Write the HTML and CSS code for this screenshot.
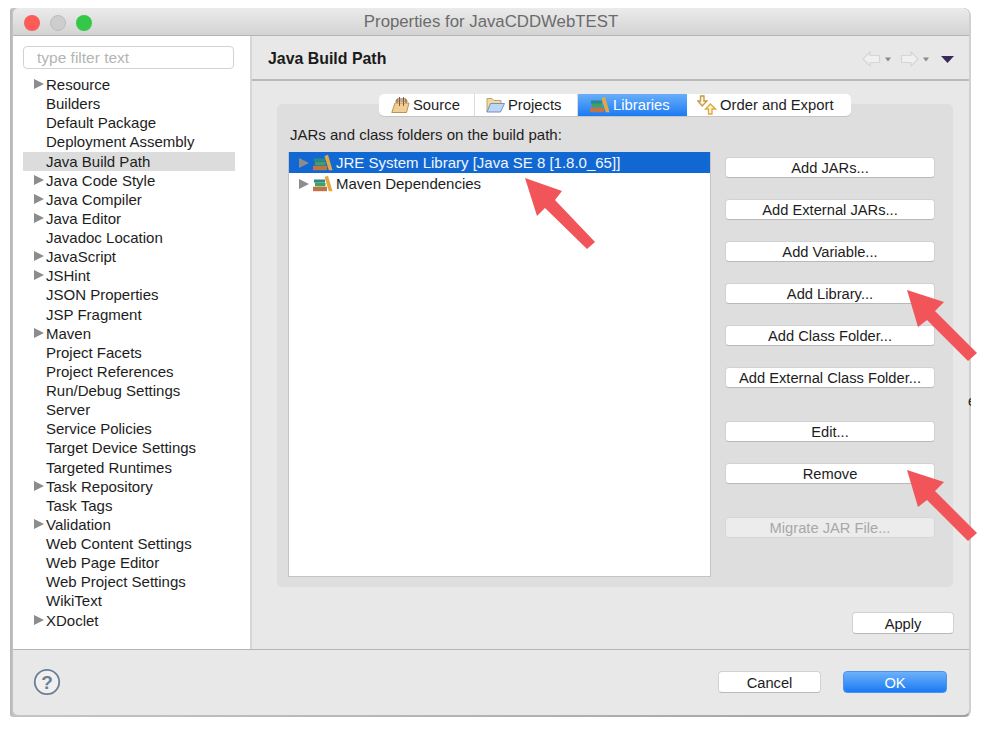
FILE: index.html
```html
<!DOCTYPE html>
<html lang="en">
<head>
    <meta charset="UTF-8">
    <title>Properties for JavaCDDWebTEST</title>
    <link rel="stylesheet" href="styles.css">
</head>
<body>
    <svg width="0" height="0" class="defs">
        <defs>
            <g id="books">
                <rect x="1" y="4.5" width="11" height="3.2" fill="#2c8a80"/>
                <rect x="2" y="8" width="10.5" height="3.4" fill="#46a05c"/>
                <rect x="0" y="11.8" width="14" height="4.4" fill="#bd7548"/>
                <path d="M11.5 2 L15 0.8 L19.5 16.2 L15.8 16.2 Z" fill="#e3a83f"/>
            </g>
        </defs>
    </svg>

    <div class="backdrop">
        <div class="window">
            <div class="titlebar">
                <div class="lights">
                    <span class="light red"></span>
                    <span class="light grey"></span>
                    <span class="light green"></span>
                </div>
                <div class="title">Properties for JavaCDDWebTEST</div>
            </div>

            <div class="main">
                <div class="sidebar">
                    <div class="filter">type filter text</div>
                    <ul class="nav">
                        <li class="has-kids">Resource</li>
                        <li>Builders</li>
                        <li>Default Package</li>
                        <li>Deployment Assembly</li>
                        <li class="active">Java Build Path</li>
                        <li class="has-kids">Java Code Style</li>
                        <li class="has-kids">Java Compiler</li>
                        <li class="has-kids">Java Editor</li>
                        <li>Javadoc Location</li>
                        <li class="has-kids">JavaScript</li>
                        <li class="has-kids">JSHint</li>
                        <li>JSON Properties</li>
                        <li>JSP Fragment</li>
                        <li class="has-kids">Maven</li>
                        <li>Project Facets</li>
                        <li>Project References</li>
                        <li>Run/Debug Settings</li>
                        <li>Server</li>
                        <li>Service Policies</li>
                        <li>Target Device Settings</li>
                        <li>Targeted Runtimes</li>
                        <li class="has-kids">Task Repository</li>
                        <li>Task Tags</li>
                        <li class="has-kids">Validation</li>
                        <li>Web Content Settings</li>
                        <li>Web Page Editor</li>
                        <li>Web Project Settings</li>
                        <li>WikiText</li>
                        <li class="has-kids">XDoclet</li>
                    </ul>
                </div>

                <div class="content">
                    <div class="header">
                        <h2>Java Build Path</h2>
                        <div class="history">
                            <svg width="30" height="16" viewBox="0 0 30 16">
                                <path d="M1 8 L8 1 V4.5 H17.5 V11.5 H8 V15 Z" fill="#f0f0f0" stroke="#d6d6d6" stroke-width="1.2"/>
                                <path d="M23 6.5 H29 L26 10.5 Z" fill="#8a8a8a"/>
                            </svg>
                            <svg width="30" height="16" viewBox="0 0 30 16">
                                <path d="M18 8 L11 1 V4.5 H1.5 V11.5 H11 V15 Z" fill="#f0f0f0" stroke="#d6d6d6" stroke-width="1.2"/>
                                <path d="M23 6.5 H29 L26 10.5 Z" fill="#8a8a8a"/>
                            </svg>
                            <svg class="menu-arrow" width="13" height="7" viewBox="0 0 13 7">
                                <path d="M0 0 H13 L6.5 7 Z" fill="#3a2a5c"/>
                            </svg>
                        </div>
                    </div>

                    <div class="body">
                        <div class="tabs">
                            <div class="tab tab-source">
                                <svg width="19" height="18" viewBox="0 0 19 18">
                                    <path d="M0.8 16.5 L4 7 H18 L15.5 16.5 Z" fill="#f0cf96" stroke="#bd934f"/>
                                    <path d="M6 7 V3 H15 V7 M8.5 1 V10 M12.5 1 V10 M4.5 5 H16.5" fill="none" stroke="#8a5a2a"/>
                                </svg>
                                Source
                            </div>
                            <div class="tab tab-projects">
                                <svg width="19" height="18" viewBox="0 0 19 18">
                                    <path d="M1 16 V2.5 H6 L8 4.5 H15 V8" fill="#f3d99c" stroke="#b9a56a"/>
                                    <path d="M1 16 L4.5 7.5 H18.5 L14.5 16 Z" fill="#bcd6f3" stroke="#6f93c4"/>
                                </svg>
                                Projects
                            </div>
                            <div class="tab tab-libraries selected">
                                <svg width="20" height="17" viewBox="0 0 20 17"><use href="#books"/></svg>
                                Libraries
                            </div>
                            <div class="tab tab-order">
                                <svg width="20" height="20" viewBox="0 0 20 20">
                                    <path d="M3.5 1 H7 V6 H10 L5.2 11 L0.8 6 H3.5 Z" fill="#fbf3dc" stroke="#c39a45" stroke-width="1.3"/>
                                    <path d="M11.5 19 H15 V14 H18.5 L13.3 9 L8.5 14 H11.5 Z" fill="#fbf3dc" stroke="#dfa83a" stroke-width="1.3"/>
                                </svg>
                                Order and Export
                            </div>
                        </div>

                        <div class="pane">
                            <div class="pane-label">JARs and class folders on the build path:</div>
                            <div class="pane-row">
                                <div class="tree">
                                    <div class="tree-row selected">
                                        <span class="twisty"></span>
                                        <svg width="20" height="17" viewBox="0 0 20 17"><use href="#books"/></svg>
                                        JRE System Library [Java SE 8 [1.8.0_65]]
                                    </div>
                                    <div class="tree-row">
                                        <span class="twisty"></span>
                                        <svg width="20" height="17" viewBox="0 0 20 17"><use href="#books"/></svg>
                                        Maven Dependencies
                                    </div>
                                </div>
                                <div class="actions">
                                    <button class="btn">Add JARs...</button>
                                    <button class="btn">Add External JARs...</button>
                                    <button class="btn">Add Variable...</button>
                                    <button class="btn">Add Library...</button>
                                    <button class="btn">Add Class Folder...</button>
                                    <button class="btn">Add External Class Folder...</button>
                                    <button class="btn group-start">Edit...</button>
                                    <button class="btn">Remove</button>
                                    <button class="btn group-start disabled">Migrate JAR File...</button>
                                </div>
                            </div>
                        </div>

                        <div class="apply-row">
                            <button class="btn apply">Apply</button>
                        </div>
                    </div>
                </div>
            </div>

            <div class="footer">
                <svg width="28" height="28" viewBox="0 0 28 28">
                    <circle cx="14" cy="14" r="12.2" fill="#f0f0f0" stroke="#6d7f96" stroke-width="1.8"/>
                    <text x="14" y="20.5" text-anchor="middle" class="help-mark">?</text>
                </svg>
                <div class="footer-buttons">
                    <button class="btn cancel">Cancel</button>
                    <button class="btn ok">OK</button>
                </div>
            </div>
        </div>
        <span class="peek">e</span>
    </div>

    <!-- red annotation arrows drawn on top of the screenshot -->
    <svg class="arrows" width="984" height="730" viewBox="0 0 984 730">
        <path d="M525 178 L562 191 L555 200 L595 242 L587 249 L545 208 L537 216 Z" fill="#f15559"/>
        <path d="M907 290 L944 302 L935 311 L977 353 L968 361 L927 320 L918 327 Z" fill="#f15559"/>
        <path d="M907 470 L944 482 L935 491 L977 533 L968 541 L927 500 L918 507 Z" fill="#f15559"/>
    </svg>
</body>
</html>
```

FILE: styles.css
```css
* {
    box-sizing: border-box;
}
html, body {
    margin: 0;
    padding: 0;
    height: 730px;
    overflow: hidden;
    background-color: white;
    font-family: "Liberation Sans", Arial, sans-serif;
    color: #1d1d1d;
}
.defs {
    display: block;
    height: 0;
}
.backdrop {
    position: relative;
    margin: 8px 0 0 10px;
    width: 961px;
    height: 709px;
    padding-left: 3px;
    padding-right: 2px;
    overflow: hidden;
    background: linear-gradient(to right, #b5b5b5 0, #c4c4c4 3px, #a0a0a0 958px, #d0d0d0 959px);
    border-radius: 3px 8px 6px 3px;
}
.window {
    display: flex;
    flex-direction: column;
    height: 707px;
    background-color: #e8e8e8;
    border-radius: 6px 6px 5px 5px;
    overflow: hidden;
}
.titlebar {
    position: relative;
    flex: 0 0 28px;
    display: flex;
    align-items: center;
    justify-content: center;
    background: linear-gradient(#ebebeb, #d3d3d3);
    border-bottom: 1px solid #b4b4b4;
}
.lights {
    position: absolute;
    left: 11px;
    top: 7px;
    display: flex;
    gap: 10px;
}
.light {
    width: 16px;
    height: 16px;
    border-radius: 50%;
}
.light.red {
    background-color: #fc5b57;
}
.light.grey {
    background-color: #cdcdcd;
    border: 1px solid #bdbdbd;
}
.light.green {
    background-color: #34c748;
}
.title {
    font-size: 16.8px;
    color: #6b6b6b;
}
.main {
    flex: 0 0 614px;
    display: flex;
    border-bottom: 1px solid #b5b5b5;
}
.sidebar {
    width: 239px;
    padding: 10px 16px 0 10px;
    background-color: white;
    border-right: 2px solid #d6d6d6;
}
.filter {
    width: 211px;
    height: 23px;
    padding-left: 13px;
    border: 1px solid #d2d2d2;
    border-radius: 4px;
    font-size: 15.5px;
    line-height: 22px;
    color: #b4b4b4;
}
.nav {
    list-style: none;
    margin: 6px 0 0;
    padding: 0;
    width: 212px;
}
.nav li {
    position: relative;
    height: 19.14px;
    padding-left: 23px;
    font-size: 15px;
    line-height: 19px;
    white-space: nowrap;
}
.nav li.active {
    background-color: #dcdcdc;
}
.nav li.has-kids::before,
.twisty {
    border-left: 10px solid #8c8c8c;
    border-top: 5.5px solid transparent;
    border-bottom: 5.5px solid transparent;
}
.nav li.has-kids::before {
    content: "";
    position: absolute;
    left: 11px;
    top: 4px;
}
.content {
    flex: 1;
    display: flex;
    flex-direction: column;
}
.header {
    flex: 0 0 45px;
    display: flex;
    align-items: center;
    justify-content: space-between;
    padding: 2px 15px 0 16px;
    border-bottom: 2px solid #b8b8b8;
}
.header h2 {
    margin: 0;
    font-size: 15.9px;
    font-weight: bold;
    color: #1a1a1a;
}
.history {
    display: flex;
    align-items: center;
    gap: 8px;
    padding-top: 1px;
}
.menu-arrow {
    margin-left: 3px;
}
.body {
    flex: 1;
    padding: 13px 16px 0 25px;
}
.tabs {
    position: relative;
    display: flex;
    justify-content: center;
    height: 23px;
    margin-bottom: -13px;
}
.tab {
    display: flex;
    align-items: center;
    gap: 3px;
    height: 22px;
    padding-bottom: 1px;
    background-color: white;
    border-right: 1px solid #dcdcdc;
    box-shadow: 0 1px 0 #c4c4c4;
    font-size: 14.8px;
}
.tab-source {
    width: 96px;
    padding-left: 12px;
    border-radius: 5px 0 0 5px;
}
.tab-projects {
    width: 103px;
    padding-left: 11px;
}
.tab-libraries {
    width: 109px;
    padding-left: 12px;
}
.tab-order {
    width: 164px;
    padding-left: 10px;
    border-right: none;
    border-radius: 0 5px 5px 0;
}
.tab.selected {
    background: linear-gradient(#68aef9, #1b7bf4);
    color: white;
    border-right: none;
}
.pane {
    height: 483px;
    padding: 22px 18px 0 11px;
    background-color: #dedede;
    border-radius: 5px;
}
.pane-label {
    height: 26px;
    padding-left: 2px;
    font-size: 15px;
    line-height: 18px;
}
.pane-row {
    display: flex;
    gap: 14px;
}
.tree {
    width: 423px;
    height: 425px;
    background-color: white;
    border: 1px solid #c4c4c4;
    border-top: none;
}
.tree-row {
    display: flex;
    align-items: center;
    height: 21px;
    padding-left: 10px;
    font-size: 15px;
    white-space: nowrap;
}
.tree-row.selected {
    background-color: #1268d3;
    color: #f2f6fc;
}
.tree-row .twisty {
    width: 0;
    height: 0;
    margin-right: 4px;
}
.tree-row svg {
    margin-right: 3px;
}
.actions {
    display: flex;
    flex-direction: column;
    gap: 21px;
    padding-top: 5px;
}
.btn {
    display: block;
    width: 210px;
    height: 21px;
    padding: 1px 0 0;
    background-color: white;
    border: 1px solid #d2d2d2;
    border-bottom-color: #b9b9b9;
    border-radius: 4px;
    font-family: inherit;
    font-size: 14.7px;
    line-height: 18px;
    color: #1d1d1d;
}
.btn.group-start {
    margin-top: 12px;
}
.btn.disabled {
    background-color: #ececec;
    border-color: #d6d6d6;
    color: #a8a8a8;
}
.apply-row {
    display: flex;
    justify-content: flex-end;
    padding-top: 25px;
    margin-right: -1px;
}
.btn.apply {
    width: 102px;
    height: 22px;
}
.footer {
    flex: 1;
    display: flex;
    align-items: flex-start;
    justify-content: space-between;
    padding: 18px 22px 0 20px;
}
.help-mark {
    font-family: "Liberation Sans", Arial, sans-serif;
    font-size: 19px;
    font-weight: bold;
    fill: #6d7f96;
}
.footer-buttons {
    display: flex;
    gap: 22px;
    padding-top: 3px;
}
.btn.cancel,
.btn.ok {
    width: 103px;
    height: 22px;
}
.btn.ok {
    width: 104px;
    background: linear-gradient(#6db1fa, #1a7bf5);
    border-color: #4a94ee;
    color: white;
}
.peek {
    position: absolute;
    left: 958px;
    top: 385px;
    font-size: 14px;
    color: #222;
}
.arrows {
    position: absolute;
    left: 0;
    top: 0;
}
```
